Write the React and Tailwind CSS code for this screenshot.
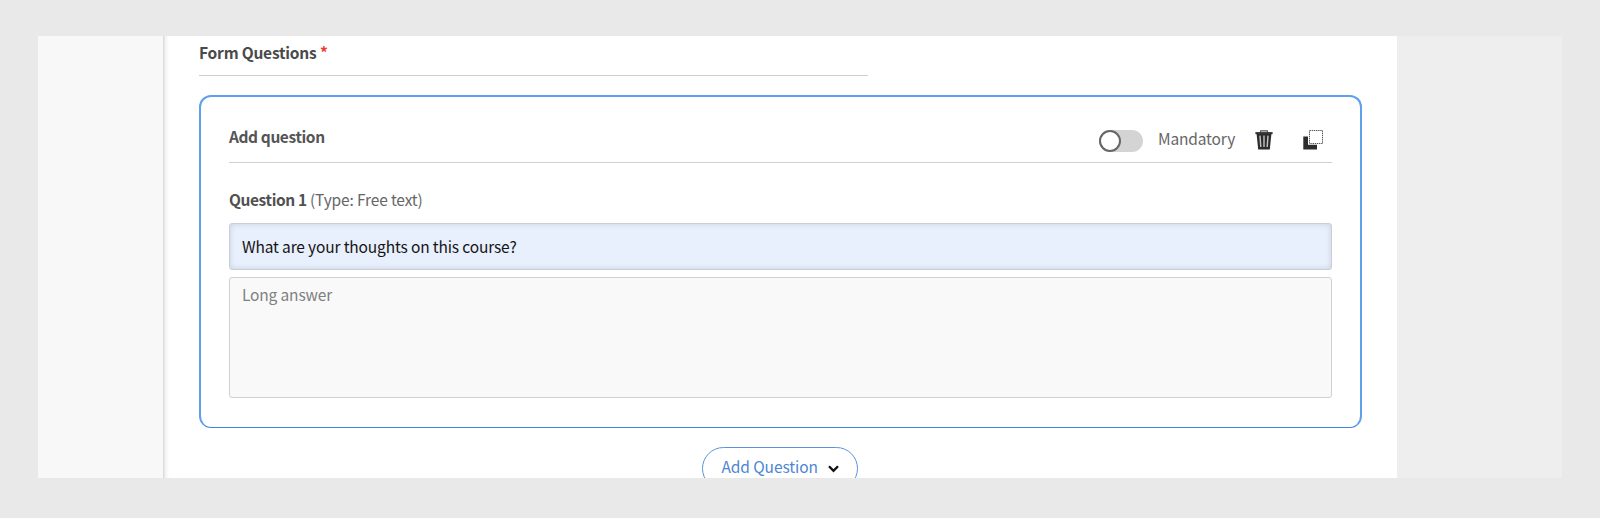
function TrashIcon() {
  return (
    <svg width="18" height="20" viewBox="0 0 18 20" className="block">
      <path d="M5.2 2.8 L5.8 0.9 H12.2 L12.8 2.8" fill="none" stroke="#555" strokeWidth="1.2" />
      <path d="M0.4 2.1 H17.6 V4.2 H0.4 Z" fill="#333" />
      <path d="M1.6 4 H16.4 L14.8 19.6 H3.2 Z" fill="#2c2c2c" />
      <path d="M5 5.6 L5.8 17 M9 5.6 V17 M13 5.6 L12.2 17" stroke="#c4c4c4" strokeWidth="1.4" />
    </svg>
  );
}

function DuplicateIcon() {
  return (
    <svg width="21" height="20" viewBox="0 0 21 20" className="block">
      <path d="M0.3 6.4 H5 V14.8 H14 V19.5 H0.3 Z" fill="#2c2c2c" />
      <rect x="6.5" y="0.5" width="13" height="13" fill="#fff" stroke="#555" strokeWidth="1" strokeDasharray="1.4 0.76" />
    </svg>
  );
}

function Toggle() {
  return (
    <div className="flex h-[22px] w-[44px] items-center rounded-full bg-[#d4d4d4]">
      <div className="size-[22px] rounded-full border-2 border-[#666] bg-white" />
    </div>
  );
}

export default function App() {
  return (
    <div className="h-[518px] w-[1600px] overflow-hidden bg-[#e9e9e9] pt-[36px] pl-[38px] font-['Noto_Sans_CJK_SC',sans-serif] text-[15.5px] tracking-[-0.15px] text-[#666]">
      <div className="flex h-[442px] w-[1524px] overflow-hidden">
        <aside className="w-[125px] shrink-0 bg-[#f8f8f8]" />
        <div className="w-[6px] shrink-0 bg-linear-to-r from-[#d6d6d6] via-[#f3f3f3] via-40% to-white" />
        <main className="flex w-[1228px] shrink-0 flex-col bg-white pl-[30px]">
          <div className="h-[40px] w-[669px] shrink-0 border-b border-[#cfcfcf] leading-[33px] font-bold tracking-[-0.2px] text-[#4a4a4a]">
            Form Questions <span className="text-[#f03a2e]">*</span>
          </div>
          <section className="mt-[19px] flex h-[333px] w-[1163px] shrink-0 flex-col rounded-[12px] border-2 border-b-1 border-[#5f9fee] border-b-[#3f85dc] px-[28px]">
            <div className="flex h-[66px] shrink-0 items-start border-b border-[#d0d0d0]">
              <h2 className="mt-[27px] leading-[24px] font-bold tracking-[-0.4px] text-[#555]">Add question</h2>
              <div className="mt-[33px] ml-auto flex items-start pr-[8px]">
                <Toggle />
                <span className="-mt-[2px] ml-[15px] w-[97px] leading-[20px] whitespace-nowrap">Mandatory</span>
                <TrashIcon />
                <div className="ml-[30px]">
                  <DuplicateIcon />
                </div>
              </div>
            </div>
            <div className="mt-[24px] h-[24px] shrink-0 leading-[24px]">
              <b className="tracking-[-0.4px] text-[#505050]">Question 1</b> (Type: Free text)
            </div>
            <div className="mt-[12px] h-[47px] shrink-0 rounded-[3px] border border-[#c9cdd4] bg-[#e8effd] pl-[12px] leading-[44px] text-[#151515] shadow-[inset_0_0_6px_rgba(0,0,0,0.13)]">
              What are your thoughts on this course?
            </div>
            <div className="mt-[7px] h-[121px] shrink-0 rounded-[3px] border border-[#d0d0d0] bg-[#f9f9f9] pl-[12px] leading-[33px] text-[#808080]">
              Long answer
            </div>
          </section>
          <div className="mt-[19px] flex w-[1161px] shrink-0 justify-center">
            <button className="flex h-[43px] w-[156px] items-center rounded-full border border-[#5a93dc] pb-[3px] pl-[19px] tracking-[-0.1px] text-[#4c86d4]">
              <span className="w-[106px] text-left whitespace-nowrap">Add Question</span>
              <svg width="11" height="8" viewBox="0 0 11 8" className="mt-[4px] block">
                <path d="M1 1.2 L5.5 5.8 L10 1.2" fill="none" stroke="#111" strokeWidth="2.3" />
              </svg>
            </button>
          </div>
        </main>
        <aside className="flex-1 bg-[#eee]" />
      </div>
    </div>
  );
}
